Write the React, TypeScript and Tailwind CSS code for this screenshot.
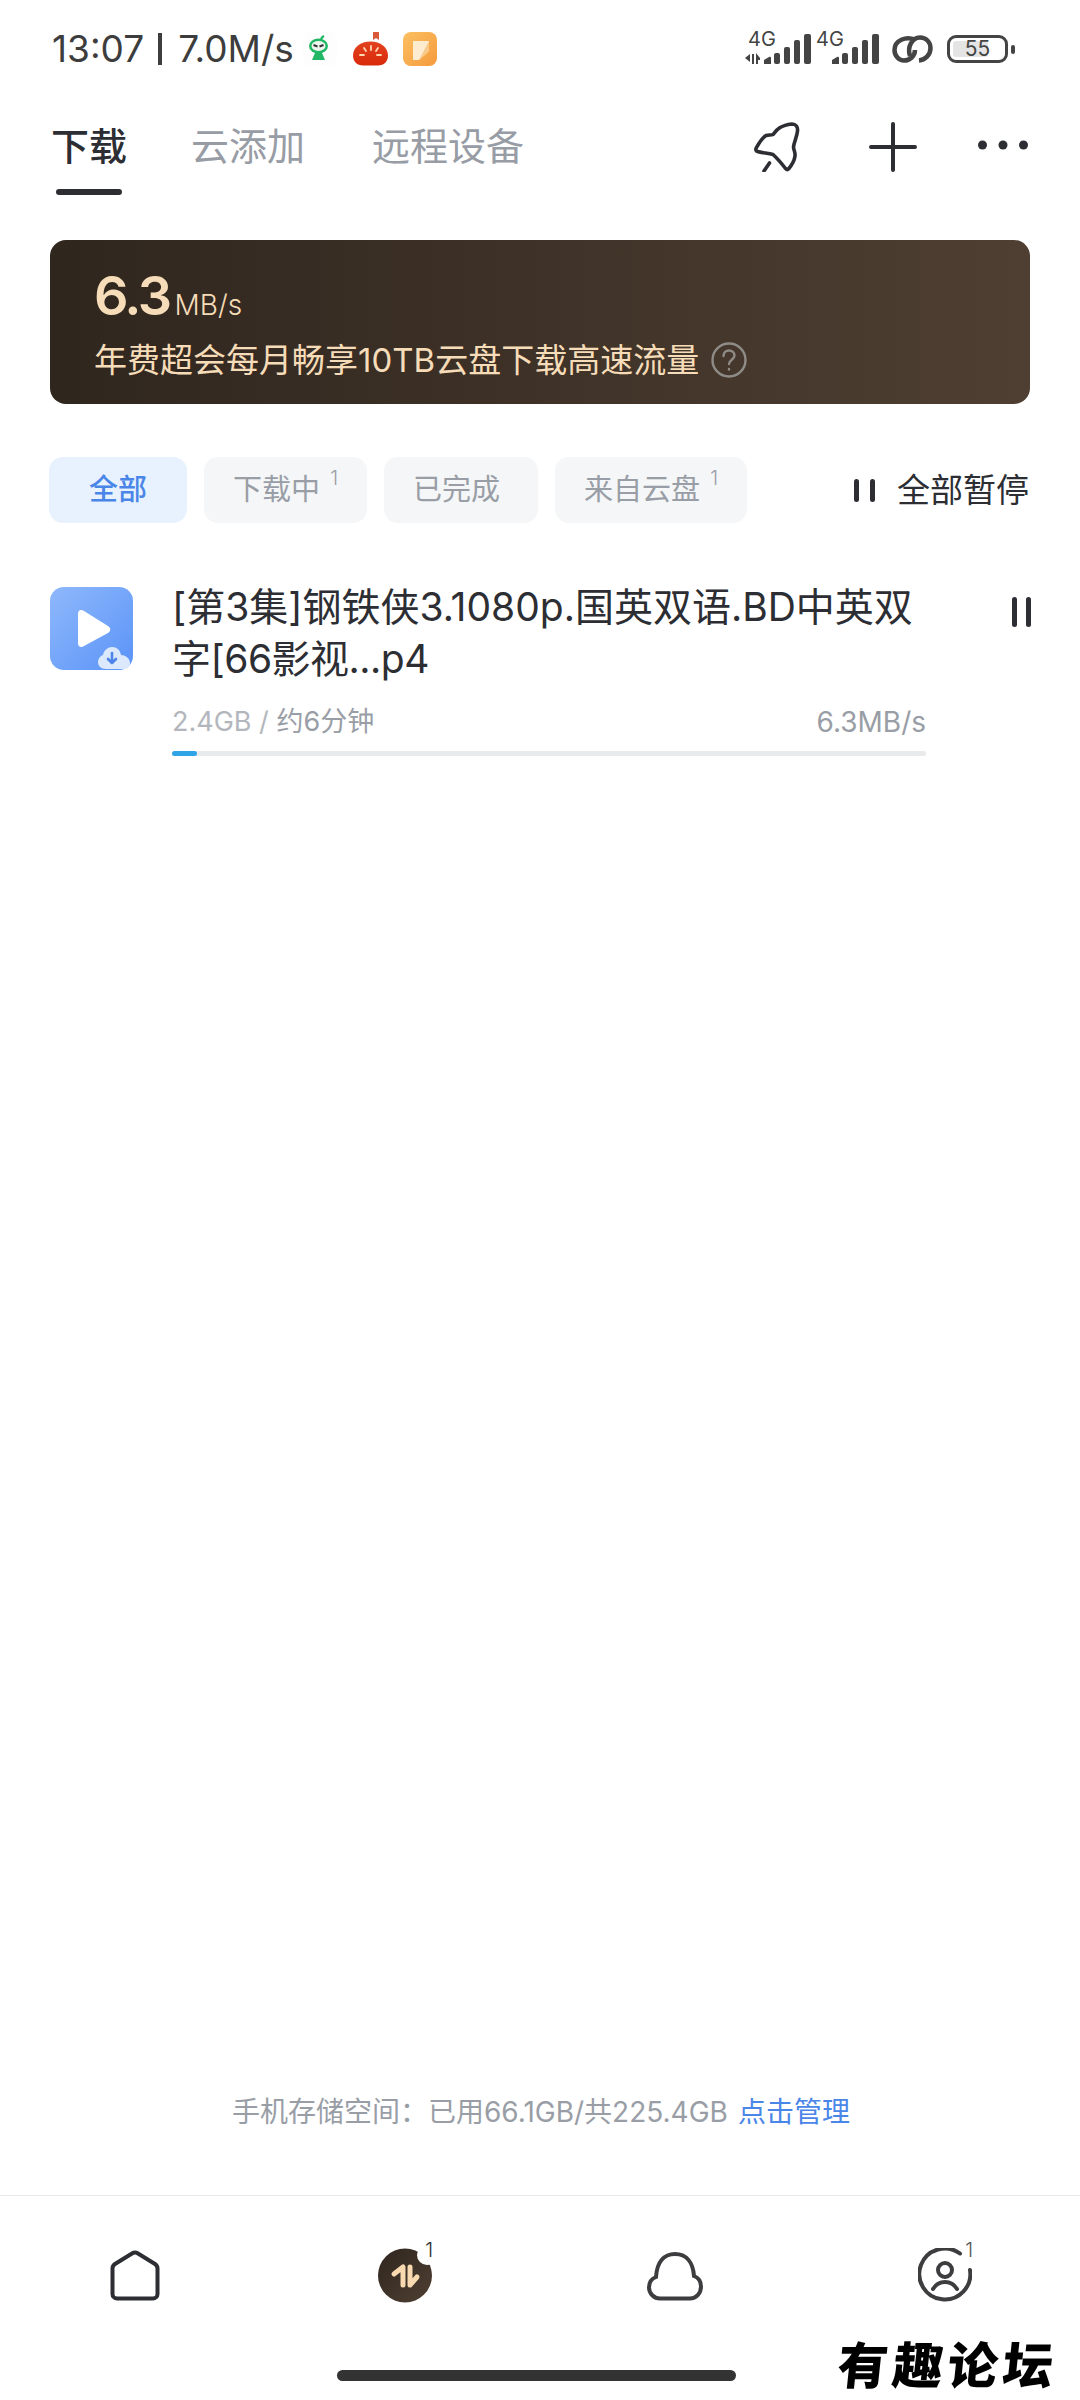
const Signal = ({ arrows }: { arrows?: boolean }) => {
  return (
    <div className="relative h-[30px] w-[66px]">
      <span className="absolute left-[3px] top-[-7px] text-[20px] leading-[24px] text-[#444]">4G</span>
      <svg className="absolute left-0 top-0" width="66" height="30" viewBox="0 0 66 30" fill="#444">
        {arrows && <path d="M5 20v8L0 24zM7 20h2v10H7zM11 19l4 5v2h-2v4h-2z" />}
        <path d="M19 26l5-3c1-.5 2 0 2 1v6h-7z" />
        <rect x="29" y="19" width="6" height="11" rx="2" />
        <rect x="39" y="13" width="6" height="17" rx="2" />
        <rect x="49" y="6" width="6" height="24" rx="2" />
        <rect x="59" y="0" width="7" height="30" rx="2" />
      </svg>
    </div>
  )
}

const Chip = ({ label, count, active }: { label: string; count?: number; active?: boolean }) => {
  return (
    <div
      className={`relative flex h-[66px] items-center rounded-[14px] text-[29px] ${
        active ? 'bg-[#e8f2fe] px-[40px] font-medium text-[#4a86e8]' : 'bg-[#f5f6f8] pl-[29px] text-[#999ea6]'
      } ${count ? 'pr-[47px]' : active ? '' : 'pr-[38px]'}`}
    >
      {label}
      {count && (
        <span className="absolute right-[29px] top-[9px] text-[20px] leading-[24px] font-light text-[#999ea6]">
          {count}
        </span>
      )}
    </div>
  )
}

const PauseBars = ({ h, gap }: { h: string; gap: string }) => {
  return (
    <div className={`flex ${h} ${gap}`}>
      <div className="w-[5px] rounded-full bg-[#2c2e33]" />
      <div className="w-[5px] rounded-full bg-[#2c2e33]" />
    </div>
  )
}

export default function App() {
  return (
    <div className="relative flex h-[2400px] w-[1080px] flex-col overflow-hidden bg-white font-['Inter','Noto_Sans_CJK_SC',sans-serif] text-[#2c2e33]">
      {/* status bar */}
      <div className="mt-[24px] flex h-[50px] items-center justify-between pl-[52px] pr-[65px]">
        <div className="flex items-center">
          <div className="flex w-[251px] items-center text-[37px] leading-[50px] whitespace-nowrap text-[#3d3d3d]">
            <span>13:07</span>
            <div className="ml-[14px] h-[32px] w-[4px] bg-[#3d3d3d]" />
            <span className="ml-[16px]">7.0M/s</span>
          </div>
          <svg width="34" height="34" viewBox="0 0 34 34">
            <rect width="34" height="34" rx="8" fill="#fdfdfd" />
            <path d="M18 8c0-2 1-3 3-4" stroke="#21b765" strokeWidth="2" fill="none" />
            <ellipse cx="15.500" cy="14" rx="9.500" ry="7.500" fill="#21b765" />
            <ellipse cx="15.500" cy="14" rx="7" ry="5" fill="#eef6f0" />
            <path d="M10.500 13l4 1.500M20.500 13l-4 1.500" stroke="#333" strokeWidth="2" />
            <path d="M9 28l3-7h7l3 7z" fill="#21b765" />
          </svg>
          <svg className="ml-[16px]" width="35" height="34" viewBox="0 0 35 34">
            <defs>
              <linearGradient id="tomato" x1="0" y1="0" x2="0" y2="1">
                <stop offset="0" stopColor="#e2421f" />
                <stop offset="1" stopColor="#d92a0c" />
              </linearGradient>
            </defs>
            <path d="M20 0h6v8l-3-2-3 2z" fill="#d9573b" />
            <path d="M17.500 9.500c10 0 17.500 6 17.500 14 0 6-4 10-10 10H10c-6 0-10-4-10-10 0-8 7.500-14 17.500-14z" fill="url(#tomato)" />
            <path d="M18 14v4M11 16l2 3M25 16l-2 3M7 23h4M24 23h4" stroke="#ffd9b0" strokeWidth="1.800" strokeLinecap="round" />
          </svg>
          <svg className="ml-[15px]" width="34" height="34" viewBox="0 0 34 34">
            <defs>
              <linearGradient id="note" x1="0" y1="0" x2="1" y2="1">
                <stop offset="0" stopColor="#fbc062" />
                <stop offset="1" stopColor="#f59a3c" />
              </linearGradient>
            </defs>
            <rect width="34" height="34" rx="8" fill="url(#note)" />
            <path d="M10 9h16v10l-10 9h-6z" fill="#fdeccf" />
            <path d="M26 9v10l-10 9z" fill="#f9c98a" />
          </svg>
        </div>
        <div className="flex items-center">
          <Signal arrows />
          <div className="ml-[2px]">
            <Signal />
          </div>
          <svg className="ml-[13px]" width="41" height="28" viewBox="0 0 41 28" fill="none" stroke="#444" strokeWidth="4.500">
            <path d="M23 4.500C14 1 2.500 5 2.500 15C2.500 21 7 25.500 12 25.500C18 25.500 23 21 23 15" />
            <path d="M18 21C15 12 20 2.500 28 2.500C34 2.500 38.500 7 38.500 13C38.500 20 33 25 27 25.500" />
          </svg>
          <div className="relative ml-[14px] flex h-[28px] w-[61px] items-center justify-center rounded-[9px] border-[3px] border-[#444]">
            <div className="absolute left-[3px] top-[3px] bottom-[3px] w-[35px] rounded-[3px] bg-[#e4e4e4]" />
            <span className="relative text-[21px] leading-[24px] text-[#444]">55</span>
          </div>
          <div className="ml-[3px] h-[9px] w-[4px] rounded-full bg-[#444]" />
        </div>
      </div>

      {/* tabs */}
      <div className="mt-[47px] flex items-start pl-[51px] pr-[52px]">
        <div className="flex flex-col items-center">
          <span className="text-[38px] leading-[50px] font-medium">下载</span>
          <div className="mt-[18px] h-[6px] w-[66px] rounded-full bg-[#2c2e33]" />
        </div>
        <span className="ml-[64px] text-[38px] leading-[50px] text-[#979ca5]">云添加</span>
        <span className="ml-[67px] text-[38px] leading-[50px] text-[#979ca5]">远程设备</span>
        <svg className="ml-auto mt-[1px]" width="46" height="50" viewBox="0 0 46 50" fill="none" stroke="#2c2e33" strokeWidth="3.600" strokeLinecap="round" strokeLinejoin="round">
          <path d="M38 2C42 2 44 5 43.500 9C43 15 40 20 39.500 25C39.500 28 41.500 30 41 34C40.500 38 37 44 34.500 47C33.500 48 32.500 47.500 31.500 46.500C28 42 24 37 19 32.500C14 31 8 31 3.500 29.500C1.500 29 1.500 27 2.500 25.500C5 21 8 16 12 13.500C15 12.500 17 13.500 19 12.500C22 9 25 3.500 38 2Z" />
          <path d="M15.500 41L10 49" />
        </svg>
        <svg className="ml-[69px] mt-[1px]" width="48" height="50" viewBox="0 0 48 50" fill="none" stroke="#2c2e33" strokeWidth="4" strokeLinecap="round">
          <path d="M24 2v46M2 25h44" />
        </svg>
        <svg className="ml-[61px] mt-[1px]" width="50" height="50" viewBox="0 0 50 50" fill="#2c2e33">
          <circle cx="4.500" cy="23" r="4.500" />
          <circle cx="25" cy="23" r="4.500" />
          <circle cx="45.500" cy="23" r="4.500" />
        </svg>
      </div>

      {/* speed banner */}
      <div className="mx-[50px] mt-[45px] flex h-[164px] flex-col rounded-[16px] bg-linear-to-r from-[#2f261e] to-[#4f3f32] pl-[44px] text-[#f6dcb8]">
        <div className="mt-[26px] flex h-[60px] items-baseline">
          <span className="text-[54px] leading-[60px] font-semibold tracking-[-2.500px]">6.3</span>
          <span className="ml-[5px] text-[28px] font-light">MB/s</span>
        </div>
        <div className="mt-[14px] flex items-center">
          <span className="text-[33px] leading-[40px] whitespace-nowrap">年费超会每月畅享10TB云盘下载高速流量</span>
          <svg className="ml-[12px]" width="36" height="36" viewBox="0 0 36 36" fill="none" stroke="#8f8c88" strokeWidth="2.400" strokeLinecap="round">
            <circle cx="18" cy="18" r="16.500" />
            <path d="M12.500 14c0-3.500 2.500-5.500 5.500-5.500s5.500 2 5.500 5c0 4-5.500 4.500-5.500 8.500" />
            <path d="M18 27v.5" />
          </svg>
        </div>
      </div>

      {/* filter chips */}
      <div className="ml-[49px] mr-[51px] mt-[53px] flex items-center">
        <Chip label="全部" active />
        <div className="ml-[17px]">
          <Chip label="下载中" count={1} />
        </div>
        <div className="ml-[17px]">
          <Chip label="已完成" />
        </div>
        <div className="ml-[17px]">
          <Chip label="来自云盘" count={1} />
        </div>
        <div className="ml-auto flex items-center">
          <PauseBars h="h-[23px]" gap="gap-[11px]" />
          <span className="ml-[22px] text-[33px] leading-[40px]">全部暂停</span>
        </div>
      </div>

      {/* download row */}
      <div className="mt-[58px] flex pl-[50px]">
        <div className="relative mt-[6px] h-[83px] w-[83px] shrink-0 rounded-[14px] bg-linear-to-br from-[#8fb8fb] to-[#5a93f7]">
          <svg className="absolute left-0 top-0" width="83" height="83" viewBox="0 0 83 83">
            <path d="M28 27c0-4 3-5 6-3l24 15c3 2 3 5 0 7L34 59c-3 2-6 1-6-3z" fill="#fff" />
            <path d="M56 82c-5 0-8-3-8-7 0-3 2-6 5-7 1-5 5-8 9-8 5 0 8 3 9 8 4 0 9 3 9 8 0 3-2 6-5 6z" fill="#dce9fd" />
            <path d="M62 66v10M58 72l4 4 4-4" stroke="#4c85e6" strokeWidth="2.600" fill="none" strokeLinecap="round" strokeLinejoin="round" />
          </svg>
        </div>
        <div className="ml-[39px] flex w-[754px] flex-col">
          <div className="text-[39px] leading-[52px] whitespace-nowrap">
            <div>[第3集]钢铁侠3.1080p.国英双语.BD中英双</div>
            <div className="tracking-[-0.5px]">字[66影视...p4</div>
          </div>
          <div className="mt-[19px] flex h-[36px] items-center justify-between leading-[36px]">
            <span className="text-[27px] text-[#b3b7bd]">
              2.4GB / <span className="text-[#999ea6]">约6分钟</span>
            </span>
            <span className="text-[28px] text-[#999ea6]">6.3MB/s</span>
          </div>
          <div className="mt-[11px] h-[5px] w-full rounded-full bg-[#e9eaec]">
            <div className="h-full w-[25px] rounded-full bg-[#2fa5e8]" />
          </div>
        </div>
        <div className="ml-[86px] mt-[16px]">
          <PauseBars h="h-[30px]" gap="gap-[9px]" />
        </div>
      </div>

      <div className="flex-1" />

      {/* storage */}
      <div className="flex h-[40px] pl-[232px] text-[28px] leading-[40px] whitespace-nowrap text-[#999ea6]">
        <span>手机存储空间：已用66.1GB/共225.4GB</span>
        <span className="ml-[10px] text-[#4a86e8]">点击管理</span>
      </div>

      {/* bottom nav */}
      <div className="mt-[63px] border-t border-[#e8e8e8] pb-[19px] pt-[52px]">
        <div className="grid h-[55px] grid-cols-4 justify-items-center">
          <svg width="50" height="55" viewBox="0 0 50 55" fill="none" stroke="#2c2e33" strokeWidth="4" strokeLinejoin="round">
            <path d="M22 5.500c2-1.200 4-1.200 6 0l17 10.500c1.500 1 2.500 2.500 2.500 4.500V46c0 2.500-2 4.500-4.500 4.500H7c-2.500 0-4.500-2-4.500-4.500V20.500c0-2 1-3.500 2.500-4.500z" />
          </svg>
          <div className="relative h-[55px] w-[54px]">
            <svg width="54" height="55" viewBox="0 0 54 55">
              <defs>
                <linearGradient id="badge" x1="0" y1="0" x2="1" y2="1">
                  <stop offset="0" stopColor="#2f261e" />
                  <stop offset="1" stopColor="#4f3f32" />
                </linearGradient>
                <mask id="bite">
                  <rect width="54" height="55" fill="#fff" />
                  <circle cx="49" cy="7" r="10" fill="#000" />
                </mask>
              </defs>
              <circle cx="27" cy="27.500" r="27" fill="url(#badge)" mask="url(#bite)" />
              <path d="M16 26l9-7v18M32 19v18l7-8" fill="none" stroke="#f8d9b0" strokeWidth="5" strokeLinecap="round" strokeLinejoin="round" />
            </svg>
            <span className="absolute right-[-1px] top-[-10px] text-[20px] leading-[24px] font-light">1</span>
          </div>
          <svg width="56" height="55" viewBox="0 0 56 55" fill="none" stroke="#3d3d3f" strokeWidth="4">
            <path d="M13 50.500c-6 0-11-5-11-11 0-5 3-9 7-10.500C10 14 17 6 28 6s18 8 19 22c4 1.500 7 5.500 7 10.500 0 7-5 12-11 12z" />
          </svg>
          <div className="relative h-[55px] w-[54px]">
            <svg width="54" height="55" viewBox="0 0 54 55" fill="none" stroke="#3d3d3f" strokeWidth="4" strokeLinecap="round">
              <path d="M42 5.500A25.500 25.500 0 1 0 52 22" />
              <circle cx="27" cy="22" r="7" />
              <path d="M15 41c3-5 7-7 12-7s9 2 12 7" />
            </svg>
            <span className="absolute right-[-1px] top-[-10px] text-[20px] leading-[24px] font-light text-[#555]">1</span>
          </div>
        </div>
        <div className="ml-[337px] mt-[67px] h-[11px] w-[399px] rounded-full bg-[#333]" />
      </div>

      {/* site watermark */}
      <div className="absolute left-[838px] top-[2338px] -skew-x-6 text-[50px] leading-[56px] font-black tracking-[5px] whitespace-nowrap text-black">
        有趣论坛
      </div>
    </div>
  )
}
